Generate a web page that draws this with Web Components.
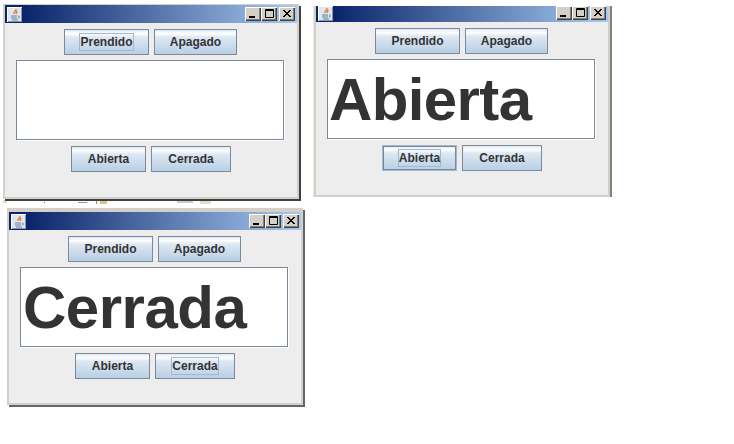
<!DOCTYPE html>
<html><head><meta charset="utf-8"><style>
html,body{margin:0;padding:0;background:#fff}
body{width:734px;height:444px;position:relative;overflow:hidden;font-family:"Liberation Sans",Arial,sans-serif}
</style></head><body>
<j-scraps></j-scraps>
<j-window style="left:3px;top:4px;height:195px" pressed="Prendido"></j-window>
<j-window style="left:314px;top:6px;height:191px;--bt:0px;--th:16px;--pb:2px;--sh:2px 0 0 #808080,-1px 0 0 #ece9e3" word="Abierta" sel="Abierta" pressed="Abierta" ls="-.6px"></j-window>
<j-window style="left:7px;top:208px;height:197px;--bt:4px;--sh:2px 2px 0 #666" word="Cerrada" pressed="Cerrada" ls="-.5px" pl="2px"></j-window>
<script>
class JScraps extends HTMLElement{
  constructor(){super();const s=this.attachShadow({mode:'open'});
  const items=[[3,200,4,3,'#e4e0c8'],[44,202,1,1,'#666'],[78,202,9,1,'#999'],[96,201,1,3,'#c08a20'],[100,201,7,3,'#dcc090'],[177,201,16,2,'#ccc'],[200,201,11,3,'#e2dfc8']];
  s.innerHTML=`<style>:host{display:block}i{position:absolute;display:block}</style>`+items.map(a=>`<i style="left:${a[0]}px;top:${a[1]}px;width:${a[2]}px;height:${a[3]}px;background:${a[4]}"></i>`).join('');}
}
customElements.define('j-scraps',JScraps);
class JButton extends HTMLElement{
  constructor(){super();const s=this.attachShadow({mode:'open'});
  s.innerHTML=`<style>
  :host{display:flex;align-items:center;justify-content:center;box-sizing:border-box;height:26px;border:1px solid #7a8a99;background:linear-gradient(#dde8f3 0,#fff 15%,#dde8f3 30%,#b8cfe5 100%);font:bold 12px "Liberation Sans",Arial,sans-serif;color:#333}
  :host([sel]){border-color:#a3b8cc;box-shadow:inset 0 0 0 1px #7a8a99}
  span{display:block;line-height:15px;padding-top:1px;border:1px solid transparent}
  :host([focus]) span{border-color:#a3b8cc}
  </style><span><slot></slot></span>`;}
}
customElements.define('j-button',JButton);
class JCtl extends HTMLElement{
  constructor(){super();const s=this.attachShadow({mode:'open'});
  s.innerHTML=`<style>
  :host{display:block;width:16px;height:14px;background:#d4d0c8;box-shadow:inset 1px 1px 0 #fff,inset -1px -1px 0 #404040,inset -2px -2px 0 #808080}
  svg{display:block}
  </style><svg width="16" height="14" viewBox="0 0 16 14"><path fill="none" stroke="#000" d=""/></svg>`;
  }
  connectedCallback(){const p=this.shadowRoot.querySelector('path');
    p.setAttribute('d',{min:'M4 9.5h6M4 10.5h6',max:'M4.5 2.5h8v8h-8zM4.5 3.5h8',close:'M4 3l7 7M5 3l7 7M11 3l-7 7M12 3l-7 7'}[this.getAttribute('k')]);
  }
}
customElements.define('j-ctl',JCtl);
class JWindow extends HTMLElement{
  constructor(){super();this.attachShadow({mode:'open'});}
  connectedCallback(){
    const w=this.getAttribute('word')||'';const p=this.getAttribute('pressed');
    const ws={Prendido:85,Apagado:83,Abierta:75,Cerrada:80};
    const b=t=>`<j-button style="width:${ws[t]}px" ${p==t?'focus':''} ${this.getAttribute('sel')==t?'sel':''}>${t}</j-button>`;
    this.shadowRoot.innerHTML=`<style>
    :host{position:absolute;display:block;box-sizing:border-box;width:296px;background:#ededed;border:2px solid #d4d0c8;border-top-width:var(--bt,1px);box-shadow:var(--sh,2px 2px 0 #404040)}
    .t{box-sizing:border-box;height:var(--th,18px);display:flex;align-items:center;background:linear-gradient(90deg,#0a246a 6%,#a6caf0);padding:0 2px var(--pb,0) 2px}
    .i{margin-right:auto;width:15px;height:15px;background:#dfe6ee;box-shadow:inset 1px 1px 0 #fff,inset -1px -1px 0 #8a97a8}
    .i svg{display:block}
    .c{display:flex;flex-direction:column;align-items:center;gap:5px;padding:6px 2px 0 0}
    .r{display:flex;gap:5px}
    .r1{margin-left:1px}
    .r2{margin-left:2px}
    .ta{box-sizing:border-box;width:268px;height:80px;margin:0 0 1px 0;background:#fff;border:1px solid #7a8a99;box-shadow:1px 1px 0 #fff;font:bold 60px "Liberation Sans",Arial,sans-serif;color:#333;line-height:80px;padding-left:${this.getAttribute('pl')||'1px'};overflow:hidden;white-space:nowrap;letter-spacing:${this.getAttribute('ls')||'0'}}
    .x{margin-left:2px}
    </style>
    <div class="t"><div class="i"><svg width="15" height="15" viewBox="0 0 15 15"><path d="M9 2c1 2-3 3-2 5M10 4c0 1-1 2-1 3" stroke="#e8701a" fill="none" stroke-width="1.3"/><path d="M4 9h6M4 11h6M5 13h6M11 9c2 0 2 2 0 2" stroke="#5f7fa6" fill="none"/></svg></div><j-ctl k="min"></j-ctl><j-ctl k="max"></j-ctl><j-ctl class="x" k="close"></j-ctl></div>
    <div class="c"><div class="r r1">${b('Prendido')}${b('Apagado')}</div><div class="ta">${w}</div><div class="r r2">${b('Abierta')}${b('Cerrada')}</div></div>`;
  }
}
customElements.define('j-window',JWindow);
</script>
</body></html>
